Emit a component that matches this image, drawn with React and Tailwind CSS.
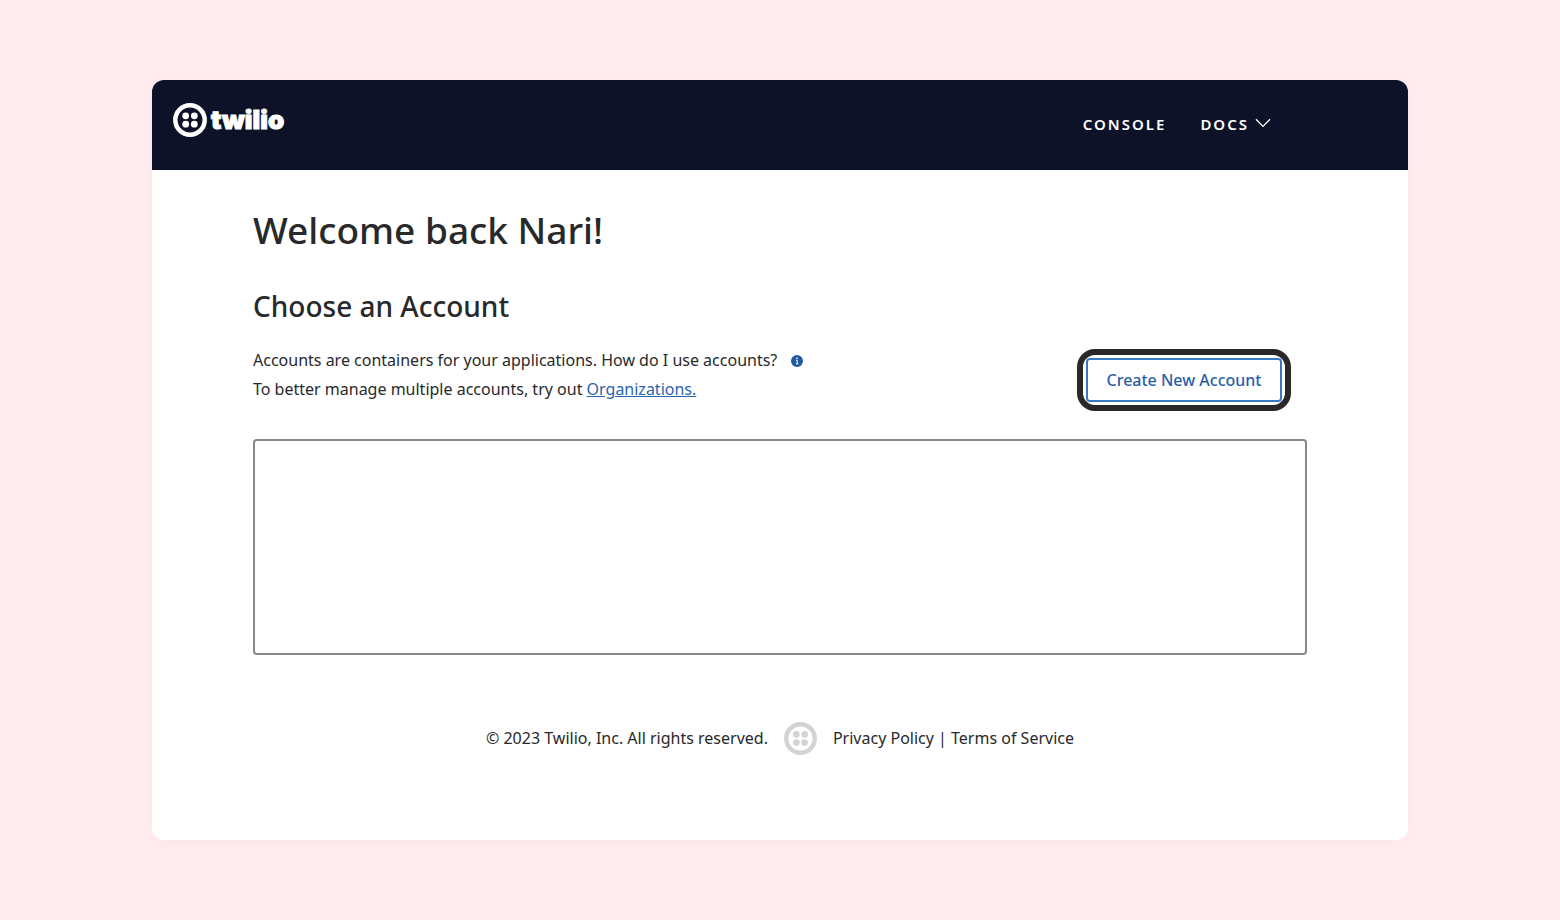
import React from "react";

function DialMark({ className }) {
  return (
    <svg viewBox="0 0 34 34" className={className} fill="currentColor" aria-hidden="true">
      <circle cx="17" cy="17" r="14.7" fill="none" stroke="currentColor" strokeWidth="4.5" />
      <circle cx="12.7" cy="12.8" r="3.4" />
      <circle cx="21.3" cy="12.8" r="3.4" />
      <circle cx="12.7" cy="21.2" r="3.4" />
      <circle cx="21.3" cy="21.2" r="3.4" />
    </svg>
  );
}

function Header() {
  return (
    <header className="flex h-[90px] items-start justify-between bg-[#0d1228] pr-[137px] pl-[21px] text-white">
      <a href="#home" className="mt-[23px] flex items-center gap-1">
        <DialMark className="size-[34px]" />
        <span className="font-[Inter,sans-serif] text-[26px] leading-[34px] font-black [-webkit-text-stroke:1px_white]">
          twilio
        </span>
      </a>
      <nav className="mt-8 flex items-center gap-[34px] text-[15px] leading-6 font-semibold tracking-[2px]">
        <a href="#console">CONSOLE</a>
        <button type="button" className="flex items-center gap-1.5 tracking-[2px]">
          DOCS
          <svg viewBox="0 0 16 10" className="mb-0.5 h-[10px] w-4" fill="none" stroke="currentColor" strokeWidth="1.3" aria-hidden="true">
            <path d="M1 1.2 8 8.4 15 1.2" />
          </svg>
        </button>
      </nav>
    </header>
  );
}

export default function App() {
  return (
    <div className="min-h-screen bg-[#feecef] px-[152px] py-20 font-['Noto_Sans',sans-serif] text-base text-[#28292b]">
      <div className="overflow-hidden rounded-xl bg-white pb-[85px] shadow-[0_2px_14px_rgba(240,100,120,0.06)]">
        <Header />
        <main className="px-[101px] pt-9">
          <h1 className="text-[37px] leading-[48px] font-medium">Welcome back Nari!</h1>
          <h2 className="mt-8 text-[28px] leading-10 font-medium">Choose an Account</h2>
          <div className="mt-5 flex items-start justify-between pr-4">
            <div className="leading-[29px]">
              <p className="flex items-center gap-3.5">
                Accounts are containers for your applications. How do I use accounts?
                <button type="button" aria-label="About accounts" className="text-[#1f5aa8]">
                  <svg viewBox="0 0 12 12" className="size-3" aria-hidden="true">
                    <circle cx="6" cy="6" r="6" fill="currentColor" />
                    <circle cx="6" cy="3.4" r="0.8" fill="#fff" />
                    <path d="M5 5.4H6.2V8.7M4.9 8.8H7.4" fill="none" stroke="#fff" strokeWidth="1" />
                  </svg>
                </button>
              </p>
              <p>
                To better manage multiple accounts, try out{" "}
                <a href="#organizations" className="text-[#2a63b0] underline">Organizations.</a>
              </p>
            </div>
            <div className="mt-[3px] rounded-[18px] border-6 border-[#282828] p-[3px]">
              <button
                type="button"
                className="block h-11 w-[196px] rounded-[4px] border-2 border-[#3a78c6] text-base font-medium text-[#2a5ea8]"
              >
                Create New Account
              </button>
            </div>
          </div>
          <section aria-label="Accounts" className="mt-7 h-[216px] rounded-[4px] border-2 border-[#85898d]" />
        </main>
        <footer className="mt-[66px] flex items-center justify-center gap-4 leading-[34px]">
          <p>© 2023 Twilio, Inc. All rights reserved.</p>
          <DialMark className="size-[33px] text-[#d3d3d3]" />
          <p>
            <a href="#privacy">Privacy Policy</a> | <a href="#terms">Terms of Service</a>
          </p>
        </footer>
      </div>
    </div>
  );
}
